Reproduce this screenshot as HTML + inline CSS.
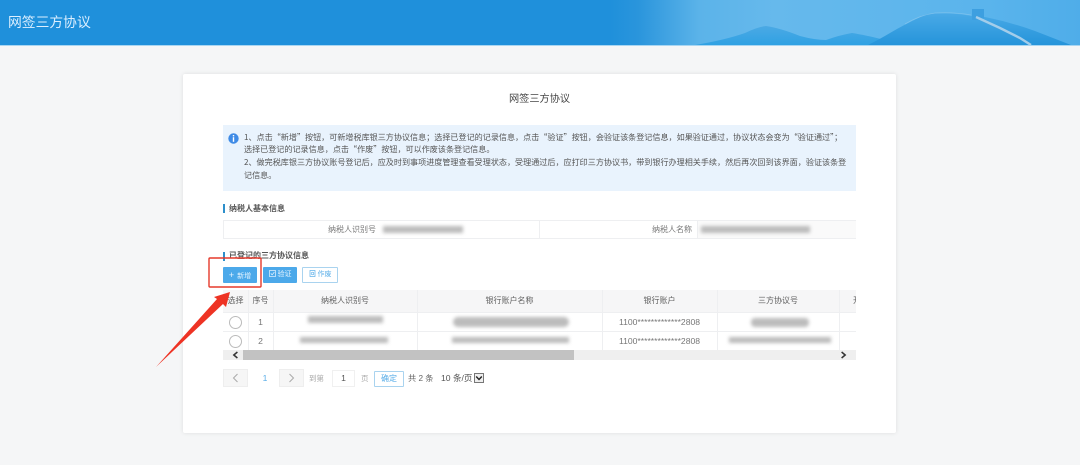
<!DOCTYPE html>
<html lang="zh-CN"><head><meta charset="utf-8"><title>网签三方协议</title>
<style>
html,body{margin:0;padding:0;width:1080px;height:465px;overflow:hidden;background:#f5f6f7}
body{font-family:"Liberation Sans","Noto Sans CJK SC",sans-serif;color:#666}
#w{position:absolute;left:0;top:0;width:1080px;height:465px;overflow:hidden;filter:blur(.35px)}
.a{position:absolute;white-space:nowrap}
.c{text-align:center}
.blur{position:absolute;background:#bcbcbc;filter:blur(1.8px)}
.line{position:absolute;background:#eeeff1}
.th{position:absolute;top:290px;height:22px;line-height:22px;font-size:8px;color:#5f5f5f;text-align:center;white-space:nowrap}
.radio{position:absolute;left:229px;width:11px;height:11px;border:1px solid #bbb;border-radius:50%;background:#fff}
.acct{position:absolute;left:602px;width:115px;text-align:center;font-size:8.6px;color:#777;white-space:nowrap}
.btn{position:absolute;top:267px;height:16px;line-height:16px;font-size:7px;text-align:center;border-radius:1px;white-space:nowrap}
.txt{font-family:"Noto Sans CJK SC","Liberation Sans",sans-serif;font-size:8.08px;color:#555;left:244px;line-height:12px}
.pg{position:absolute;top:369px;height:18px;background:#f6f6f6;border:1px solid #eee;box-sizing:border-box}
</style></head><body><div id="w">

<div class="a" style="left:0;top:0;width:1080px;height:45px;background:#1f90db;overflow:hidden">
<svg width="1080" height="45" style="position:absolute;left:0;top:0">
<defs>
<linearGradient id="sky" gradientUnits="userSpaceOnUse" x1="610" x2="1080" y1="0" y2="0">
<stop offset="0" stop-color="#1f90db"/><stop offset=".06" stop-color="#2a95dc"/><stop offset=".19" stop-color="#5bb3e9"/><stop offset=".35" stop-color="#66b9ec"/><stop offset=".8" stop-color="#5ab4ec"/><stop offset="1" stop-color="#4fade9"/>
</linearGradient>
<linearGradient id="mt" x1="0" x2="0" y1="0" y2="1"><stop offset="0" stop-color="#4ba9e4"/><stop offset="1" stop-color="#2fa1e3"/></linearGradient>
<linearGradient id="mt2" x1="0" x2="0" y1="0" y2="1"><stop offset="0" stop-color="#49a9e6"/><stop offset="1" stop-color="#2594da"/></linearGradient>
</defs>
<rect x="610" y="0" width="470" height="45" fill="url(#sky)"/>
<path d="M695 45 Q725 40 745 33 Q757 27 766 26 Q780 28 800 36 Q815 40 826 40 Q840 35 852 33 Q865 35 885 40 L895 45Z" fill="url(#mt)"/>
<path d="M868 45 Q880 39 890 33 Q905 24 927 14 Q950 12 972 16 L985 17 Q1010 22 1035 31 L1071 45Z" fill="url(#mt2)"/>
<path d="M972 9 H984 V18 L976 20 H972Z" fill="#3d9fe0"/>
<path d="M976 17 L1000 28 L1020 38 L1031 45" stroke="#a3cdea" stroke-width="2.4" fill="none"/>
<path d="M905 24 Q920 15 935 13 Q955 12 971 15" stroke="#8cc8ee" stroke-width=".8" fill="none" opacity=".7"/>
</svg>
</div>
<div class="a" style="left:0;top:45px;width:1080px;height:1px;background:#a9d6f2"></div>
<div class="a" style="left:8px;top:12px;font-size:13.8px;line-height:22px;color:#dcefff">网签三方协议</div>

<div class="a" style="left:183px;top:74px;width:713px;height:359px;background:#fff;box-shadow:0 0 4px rgba(0,0,0,.1);border-radius:2px"></div>
<div class="a" style="left:509px;top:92px;font-size:10.2px;line-height:16px;color:#444">网签三方协议</div>

<div class="a" style="left:223px;top:125px;width:633px;height:66px;background:#e9f3fd"></div>
<svg class="a" style="left:228px;top:133px" width="11" height="11" viewBox="0 0 11 11"><circle cx="5.5" cy="5.5" r="5.2" fill="#3f8be6"/><rect x="4.8" y="2" width="1.4" height="1.4" fill="#fff"/><rect x="4.8" y="4.2" width="1.4" height="4.6" fill="#fff"/></svg>
<div class="a txt" style="top:132px">1、点击“新增”按钮，可新增税库银三方协议信息；选择已登记的记录信息，点击“验证”按钮，会验证该条登记信息，如果验证通过，协议状态会变为“验证通过”；</div>
<div class="a txt" style="top:144px">选择已登记的记录信息，点击“作废”按钮，可以作废该条登记信息。</div>
<div class="a txt" style="top:157px">2、做完税库银三方协议账号登记后，应及时到事项进度管理查看受理状态，受理通过后，应打印三方协议书，带到银行办理相关手续，然后再次回到该界面，验证该条登</div>
<div class="a txt" style="top:170px">记信息。</div>

<div class="a" style="left:223px;top:204px;width:2px;height:9px;background:#2d8fcb"></div>
<div class="a" style="left:229px;top:203px;font-size:8px;line-height:12px;font-weight:bold;color:#555">纳税人基本信息</div>

<div class="line" style="left:223px;top:220px;width:633px;height:1px"></div>
<div class="line" style="left:223px;top:238px;width:633px;height:1px"></div>
<div class="line" style="left:223px;top:220px;width:1px;height:19px"></div>
<div class="line" style="left:539px;top:220px;width:1px;height:19px"></div>
<div class="line" style="left:697px;top:220px;width:1px;height:19px"></div>
<div class="a" style="left:698px;top:221px;width:158px;height:17px;background:#fafafa"></div>
<div class="a" style="left:328px;top:223px;font-size:8px;line-height:13px;color:#777">纳税人识别号</div>
<div class="a" style="left:652px;top:223px;font-size:8px;line-height:13px;color:#777">纳税人名称</div>
<div class="blur" style="left:383px;top:226px;width:80px;height:7px"></div>
<div class="blur" style="left:701px;top:226px;width:109px;height:7px"></div>

<div class="a" style="left:223px;top:252px;width:2px;height:9px;background:#2d8fcb"></div>
<div class="a" style="left:229px;top:250px;font-size:8px;line-height:12px;font-weight:bold;color:#555">已登记的三方协议信息</div>

<div class="btn" style="left:223px;width:34px;background:#4ca9ea;color:#e6f4ff"><span style="font-size:9px;margin-right:1px">+</span> 新增</div>
<div class="btn" style="left:263px;width:34px;background:#4ca9ea;color:#e6f4ff"><svg width="7" height="7" viewBox="0 0 7 7" style="vertical-align:-1px;margin-right:2px"><rect x=".5" y=".5" width="6" height="6" fill="none" stroke="#e6f4ff" stroke-width=".7"/><path d="M1.8 3.4 L3.1 4.8 L5.4 2" fill="none" stroke="#e6f4ff" stroke-width=".7"/></svg>验证</div>
<div class="btn" style="left:302px;width:36px;background:#fff;border:1px solid #a9d3ef;box-sizing:border-box;line-height:14px;color:#5aaee8"><svg width="7" height="7" viewBox="0 0 7 7" style="vertical-align:-1px;margin-right:2px"><rect x="1" y=".5" width="5" height="6" fill="none" stroke="#5aaee8" stroke-width=".7"/><circle cx="3.5" cy="3.5" r="1.3" fill="none" stroke="#5aaee8" stroke-width=".6"/></svg>作废</div>

<div class="a" style="left:223px;top:290px;width:633px;height:22px;background:#f6f6f7"></div>
<div class="line" style="left:223px;top:312px;width:633px;height:1px"></div>
<div class="line" style="left:223px;top:331px;width:633px;height:1px"></div>
<div class="line" style="left:248px;top:290px;width:1px;height:60px"></div>
<div class="line" style="left:273px;top:290px;width:1px;height:60px"></div>
<div class="line" style="left:417px;top:290px;width:1px;height:60px"></div>
<div class="line" style="left:602px;top:290px;width:1px;height:60px"></div>
<div class="line" style="left:717px;top:290px;width:1px;height:60px"></div>
<div class="line" style="left:839px;top:290px;width:1px;height:60px"></div>

<div class="th" style="left:223px;width:25px">选择</div>
<div class="th" style="left:248px;width:25px">序号</div>
<div class="th" style="left:273px;width:144px">纳税人识别号</div>
<div class="th" style="left:417px;width:185px">银行账户名称</div>
<div class="th" style="left:602px;width:115px">银行账户</div>
<div class="th" style="left:717px;width:122px">三方协议号</div>
<div class="th" style="left:853px;width:3px;overflow:hidden;text-align:left">开</div>

<div class="radio" style="top:316px"></div>
<div class="radio" style="top:335px"></div>
<div class="a c" style="left:248px;top:315px;width:25px;font-size:8.6px;line-height:15px;color:#777">1</div>
<div class="a c" style="left:248px;top:334px;width:25px;font-size:8.6px;line-height:15px;color:#777">2</div>
<div class="blur" style="left:308px;top:316px;width:75px;height:7px"></div>
<div class="blur" style="left:300px;top:337px;width:88px;height:6px"></div>
<div class="blur" style="left:453px;top:317px;width:116px;height:10px;border-radius:5px"></div>
<div class="blur" style="left:452px;top:337px;width:117px;height:6px"></div>
<div class="acct" style="top:316px;line-height:13px">1100*************2808</div>
<div class="acct" style="top:335px;line-height:13px">1100*************2808</div>
<div class="blur" style="left:751px;top:318px;width:58px;height:9px;border-radius:4px"></div>
<div class="blur" style="left:729px;top:337px;width:102px;height:6px"></div>

<div class="a" style="left:223px;top:350px;width:633px;height:10px;background:#efefef"></div>
<div class="a" style="left:243px;top:350px;width:331px;height:10px;background:#c2c2c2"></div>
<svg class="a" style="left:232px;top:351px" width="7" height="8" viewBox="0 0 7 8"><path d="M5.4 1 L1.8 4 L5.4 7" fill="none" stroke="#333" stroke-width="1.5"/></svg>
<svg class="a" style="left:840px;top:351px" width="7" height="8" viewBox="0 0 7 8"><path d="M1.6 1 L5.2 4 L1.6 7" fill="none" stroke="#333" stroke-width="1.5"/></svg>

<div class="pg" style="left:223px;width:25px"></div>
<svg class="a" style="left:232px;top:373px" width="7" height="10" viewBox="0 0 7 10"><path d="M5.5 1 L1.5 5 L5.5 9" fill="none" stroke="#aaa" stroke-width="1"/></svg>
<div class="a c" style="left:255px;top:372px;width:20px;font-size:8.6px;line-height:13px;color:#5aaee8">1</div>
<div class="pg" style="left:279px;width:25px"></div>
<svg class="a" style="left:288px;top:373px" width="7" height="10" viewBox="0 0 7 10"><path d="M1.5 1 L5.5 5 L1.5 9" fill="none" stroke="#aaa" stroke-width="1"/></svg>
<div class="a" style="left:309px;top:373px;font-size:7.5px;line-height:12px;color:#aaa">到第</div>
<div class="a c" style="left:332px;top:370px;width:23px;height:17px;box-sizing:border-box;border:1px solid #f0f0f0;font-size:8.6px;line-height:15px;color:#555">1</div>
<div class="a" style="left:361px;top:373px;font-size:7.5px;line-height:12px;color:#aaa">页</div>
<div class="a c" style="left:374px;top:371px;width:30px;height:16px;box-sizing:border-box;border:1px solid #a9d3ef;font-size:8px;line-height:14px;color:#5aaee8;border-radius:1px">确定</div>
<div class="a" style="left:408px;top:372px;font-size:8.2px;line-height:13px;color:#666">共 2 条</div>
<div class="a" style="left:441px;top:371px;font-size:8.6px;line-height:15px;color:#555">10 条/页</div>
<div class="a" style="left:474px;top:373px;width:10px;height:10px;box-sizing:border-box;border:1px solid #777;background:#eee"></div>
<svg class="a" style="left:474px;top:373px" width="10" height="10" viewBox="0 0 10 10"><path d="M2.2 3.5 L5 6.5 L7.8 3.5" fill="none" stroke="#222" stroke-width="1.4"/></svg>

<svg class="a" style="left:0;top:0;pointer-events:none" width="1080" height="465">
<rect x="209" y="258" width="52" height="29" fill="none" stroke="#e53a2c" stroke-width="1.4" rx="1"/>
<path d="M156 367 L217 299 L214 297 L230 292 L226 307 L223 304 Z" fill="#ee3324"/>
</svg>
</div></body></html>
